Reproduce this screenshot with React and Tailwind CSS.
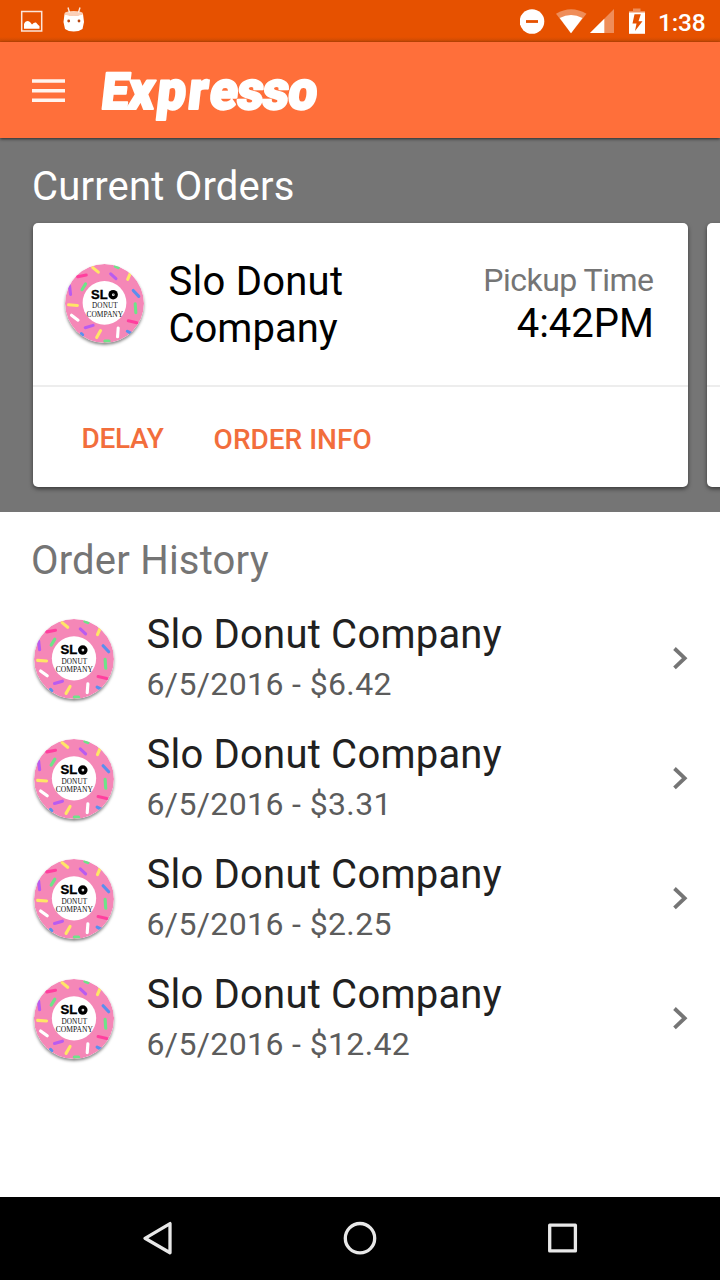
const sprinkles = [
  ['#ffe666', 113, 38, 130, 52],
  ['#6fe388', 182, 34, 191, 38],
  ['#ff3f9e', 67, 66, 93, 61],
  ['#b95cf0', 168, 57, 184, 72],
  ['#ffe666', 229, 53, 220, 74],
  ['#6fe388', 91, 88, 80, 106],
  ['#b95cf0', 42, 94, 45, 120],
  ['#5b8fee', 237, 108, 254, 126],
  ['#ffe666', 39, 152, 66, 154],
  ['#6fe388', 243, 149, 245, 176],
  ['#ffffff', 48, 184, 68, 199],
  ['#b95cf0', 90, 222, 114, 215],
  ['#ffe666', 137, 231, 125, 252],
  ['#ffffff', 191, 223, 189, 250],
  ['#ff3f9e', 222, 201, 248, 207],
  ['#5b8fee', 219, 233, 232, 240],
  ['#6fe388', 150, 263, 163, 263],
  ['#5b8fee', 78, 240, 82, 244],
];

function DonutLogo({ className }) {
  return (
    <svg viewBox="28 27 242 242" className={`shrink-0 overflow-visible rounded-full shadow-[0_2px_3px_rgba(0,0,0,0.45)] ${className}`}>
      <defs>
        <clipPath id="donut">
          <circle cx="149" cy="148" r="121" />
        </clipPath>
      </defs>
      <g clipPath="url(#donut)">
        <circle cx="149" cy="148" r="121" fill="#f587b7" />
        {sprinkles.map(([color, x1, y1, x2, y2], i) => (
          <line key={i} x1={x1} y1={y1} x2={x2} y2={y2} stroke={color} strokeWidth="9.500" strokeLinecap="round" />
        ))}
      </g>
      <circle cx="149" cy="146" r="67" fill="#fff" />
      <text x="108" y="134" fontFamily="Liberation Sans, sans-serif" fontWeight="700" fontSize="38" textLength="51" lengthAdjust="spacingAndGlyphs" stroke="#000" strokeWidth="1">SL</text>
      <circle cx="175.500" cy="121" r="14.500" fill="#000" />
      <circle cx="176" cy="121" r="4" fill="#fff" />
      <circle cx="176" cy="121" r="1.500" fill="#000" />
      <text x="111" y="162" fontFamily="Liberation Serif, serif" fontSize="22" textLength="78" fill="#111">DONUT</text>
      <text x="94" y="188" fontFamily="Liberation Serif, serif" fontSize="22" textLength="112" lengthAdjust="spacingAndGlyphs" fill="#111">COMPANY</text>
    </svg>
  );
}

function StatusBar() {
  return (
    <div className="flex h-[42px] items-start justify-between bg-[linear-gradient(#e65100_0,#e65100_37px,#c94a05_42px)] text-white">
      <svg width="100" height="42" viewBox="0 0 100 42">
        <rect x="21.700" y="11.500" width="20" height="19.500" fill="none" stroke="#fff" strokeOpacity=".85" strokeWidth="1.500" />
        <path d="M24 28.700V24Q25 21 28 21Q30 21 32 24.500Q34 22 36 22.500Q38 25 39.500 26v2.700z" fill="#fff" />
        <path d="M64.500 14Q74 17 83 14L84 22 82.500 29Q79 31.500 73.700 31.500T65 29L63.500 22z" fill="#fff" />
        <ellipse cx="73.700" cy="13.500" rx="9.300" ry="2.600" fill="#fbd0b8" />
        <path d="M68 7.500l1.500 5M80 7.500l-1.500 5" stroke="#fff" strokeOpacity=".85" strokeWidth="1.400" />
        <circle cx="68.700" cy="21" r="1.400" fill="#b94712" />
        <circle cx="79" cy="21" r="1.400" fill="#b94712" />
      </svg>
      <div className="flex">
        <svg width="138" height="42" viewBox="520 0 138 42">
          <circle cx="532" cy="21.500" r="12.300" fill="#fff" />
          <path d="M526 21.500h12" stroke="#e65100" strokeWidth="2.800" />
          <path d="M571 33.200L556 13.800Q571 4.500 586.500 13.800z" fill="#fff" fillOpacity=".35" />
          <path d="M571 33.200L559.700 18Q571 11.800 582.500 18z" fill="#fff" />
          <path d="M614 9v24h-24z" fill="#fff" fillOpacity=".35" />
          <path d="M604.300 18.700V33H590z" fill="#fff" />
          <path d="M633 8.500h7.500v2.500H645v3h-16v-3h4z" fill="#fff" fillOpacity=".35" />
          <path d="M629 12.500h16v21.300h-16z" fill="#fff" />
          <path d="M634.500 14.300h6.300l-2.300 7h4l-7.500 9.700 1.500-7.500h-4z" fill="#e65100" />
        </svg>
        <div className="mt-[8.500px] w-[62px] text-[24.500px] font-medium leading-[28px] tracking-[-0.200px]">1:38</div>
      </div>
    </div>
  );
}

function Toolbar() {
  return (
    <header className="relative z-10 flex h-[96px] items-center bg-[#ff6f3a] pl-[32px] shadow-[0_1px_3px_rgba(0,0,0,0.65)]">
      <svg className="mr-[37px]" width="33" height="24" viewBox="32 78.500 33 24" stroke="#fff" strokeOpacity=".92" strokeWidth="3.500">
        <path d="M32 81.500h33M32 91.200h33M32 100.700h33" />
      </svg>
      <svg width="220" height="96" viewBox="102 42 220 96" className="overflow-visible">
        <g transform="translate(100 108.500) skewX(-6.500) scale(.95 1)">
          <text x="0 28 58.400 91.200 114 142.800 169.500 196.500" y="0" fontFamily="Roboto, sans-serif" fontWeight="900" fontSize="54" fill="#fff" stroke="#fff" strokeWidth="2.200" strokeLinejoin="round"><tspan fontSize="51">E</tspan>xpresso</text>
        </g>
      </svg>
    </header>
  );
}

function Card({ children }) {
  return (
    <article className="h-[263.500px] w-[654.500px] shrink-0 rounded-[5px] bg-white shadow-[0_2px_4px_rgba(0,0,0,0.5)]">
      {children}
    </article>
  );
}

function OrderCard() {
  return (
    <Card>
      <div className="flex h-[164px] border-b-2 border-[#ededed] pl-[32px] pr-[33.500px]">
        <DonutLogo className="mt-[41px] h-[79px] w-[79px]" />
        <h2 className="ml-[24.500px] mt-[35px] w-[220px] text-[40px] leading-[47px] tracking-[0.250px] text-black">Slo Donut <span className="tracking-[0px]">Company</span></h2>
        <div className="ml-auto mt-[38px] text-right">
          <div className="-ml-1 pr-[0.500px] text-[32px] leading-[38px] tracking-[-0.500px] text-[#757575]">Pickup Time</div>
          <div className="mt-[1px] text-[40px] leading-[47px] text-black">4:42PM</div>
        </div>
      </div>
      <div className="flex gap-[50px] pl-[48.500px] pt-[35px] text-[28px] font-medium leading-[33px] text-[#f26e3c]">
        <button className="h-[33px] tracking-[-0.300px]">DELAY</button>
        <button className="mt-px h-[33px]">ORDER INFO</button>
      </div>
    </Card>
  );
}

function HistoryRow({ date, price }) {
  return (
    <li className="flex h-[120px] items-start pl-[34px] pr-[31px]">
      <DonutLogo className="mt-[20px] h-[80px] w-[80px]" />
      <div className="ml-[32.500px] mt-[12px]">
        <div className="text-[40px] leading-[47px] tracking-[0.220px] text-[#212121]">Slo Donut Company</div>
        <div className="mt-[7px] text-[32px] leading-[38px] tracking-[0.370px] text-[#5c5c5c]">{date} - {price}</div>
      </div>
      <svg className="ml-auto mt-[47px]" width="17" height="24" viewBox="672 646 17 24">
        <path d="M674.500 648.500l10.200 9.700-10.200 9.700" fill="none" stroke="#757575" strokeWidth="3.800" />
      </svg>
    </li>
  );
}

export default function App() {
  const history = ['$6.42', '$3.31', '$2.25', '$12.42'];
  return (
    <div className="flex h-[1280px] w-[720px] flex-col overflow-hidden whitespace-nowrap bg-white font-[Roboto,sans-serif]">
      <StatusBar />
      <Toolbar />
      <section className="h-[373.500px] bg-[#757575] pt-[25px]">
        <h1 className="pl-[32px] text-[40px] leading-[47px] tracking-[0.200px] text-white">Current Orders</h1>
        <div className="mt-[13px] flex gap-[19px] overflow-visible whitespace-normal pl-[33px]">
          <OrderCard />
          <Card>
            <div className="h-[164px] border-b-2 border-[#ededed]" />
          </Card>
        </div>
      </section>
      <section className="flex-1">
        <h1 className="pl-[31px] pt-[25px] text-[40px] leading-[47px] tracking-[0.200px] text-[#757575]">Order History</h1>
        <ul className="mt-[15px]">
          {history.map((price) => <HistoryRow key={price} date="6/5/2016" price={price} />)}
        </ul>
      </section>
      <nav className="flex h-[83px] justify-center bg-black">
        <svg width="520" height="83" viewBox="100 1197 520 83" fill="none" stroke="#e8e8e8" strokeWidth="3.300" strokeLinejoin="round">
          <path d="M145 1238.300l25-14.700v29.200z" />
          <circle cx="360" cy="1238.200" r="14.700" />
          <rect x="549.700" y="1225.200" width="25.700" height="25.700" />
        </svg>
      </nav>
    </div>
  );
}
